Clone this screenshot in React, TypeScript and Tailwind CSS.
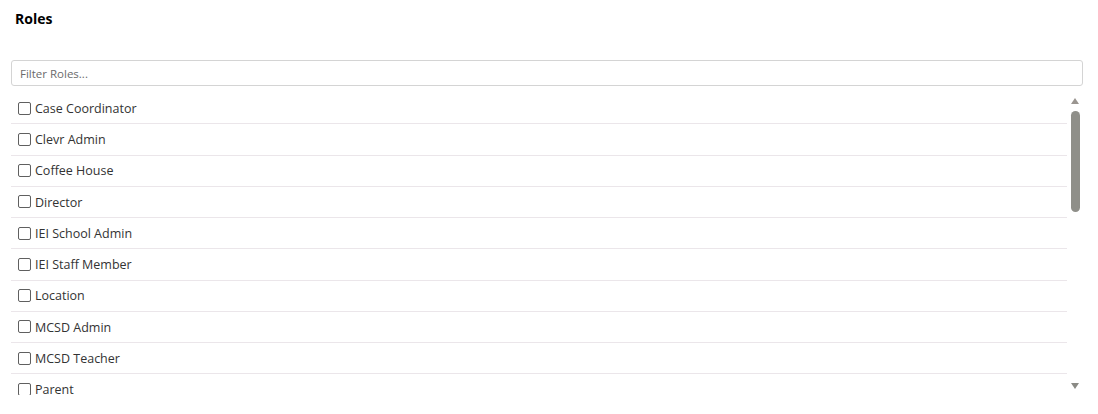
import React from "react";

const roles = [
  "Case Coordinator",
  "Clevr Admin",
  "Coffee House",
  "Director",
  "IEI School Admin",
  "IEI Staff Member",
  "Location",
  "MCSD Admin",
  "MCSD Teacher",
  "Parent",
];

export default function App() {
  return (
    <div className="w-[1098px] h-[414px] bg-white font-['Open_Sans',sans-serif] text-[#333]">
      <div className="px-[11px]">
        <h2 className="pt-[9px] pl-[4px] h-[60px] text-[14px] font-bold text-black leading-[20px]">
          Roles
        </h2>
        <input
          type="text"
          placeholder="Filter Roles..."
          className="block w-[1072px] h-[26px] px-[8px] border border-[#d4d4d4] rounded-[3px] text-[11.5px] placeholder:text-[#6b6b6b] outline-none"
        />
        <div className="flex mt-[7px] h-[302px] w-[1072px]">
          <div className="flex-1 overflow-hidden">
            {roles.map((r) => (
              <label
                key={r}
                className="flex items-center h-[31.25px] border-b border-[#ebe6ea] pl-[7px] pt-[2px] text-[12.5px]"
              >
                <span className="w-[13px] h-[13px] mb-[2px] border border-[#5f5f5f] rounded-[2px] mr-[4px] bg-white" />
                {r}
              </label>
            ))}
          </div>
          <div className="w-[16px] flex flex-col items-center pt-[4px] pb-[5px]">
            <svg width="10" height="8" viewBox="0 0 10 8" className="mb-[6px]">
              <path d="M5 1 L9 7 L1 7 Z" fill="#9a9590" />
            </svg>
            <div className="w-[9px] h-[101px] rounded-full bg-[#8f8f89]" />
            <div className="flex-1" />
            <svg width="10" height="8" viewBox="0 0 10 8">
              <path d="M1 1 L9 1 L5 7 Z" fill="#8a8a85" />
            </svg>
          </div>
        </div>
      </div>
    </div>
  );
}
